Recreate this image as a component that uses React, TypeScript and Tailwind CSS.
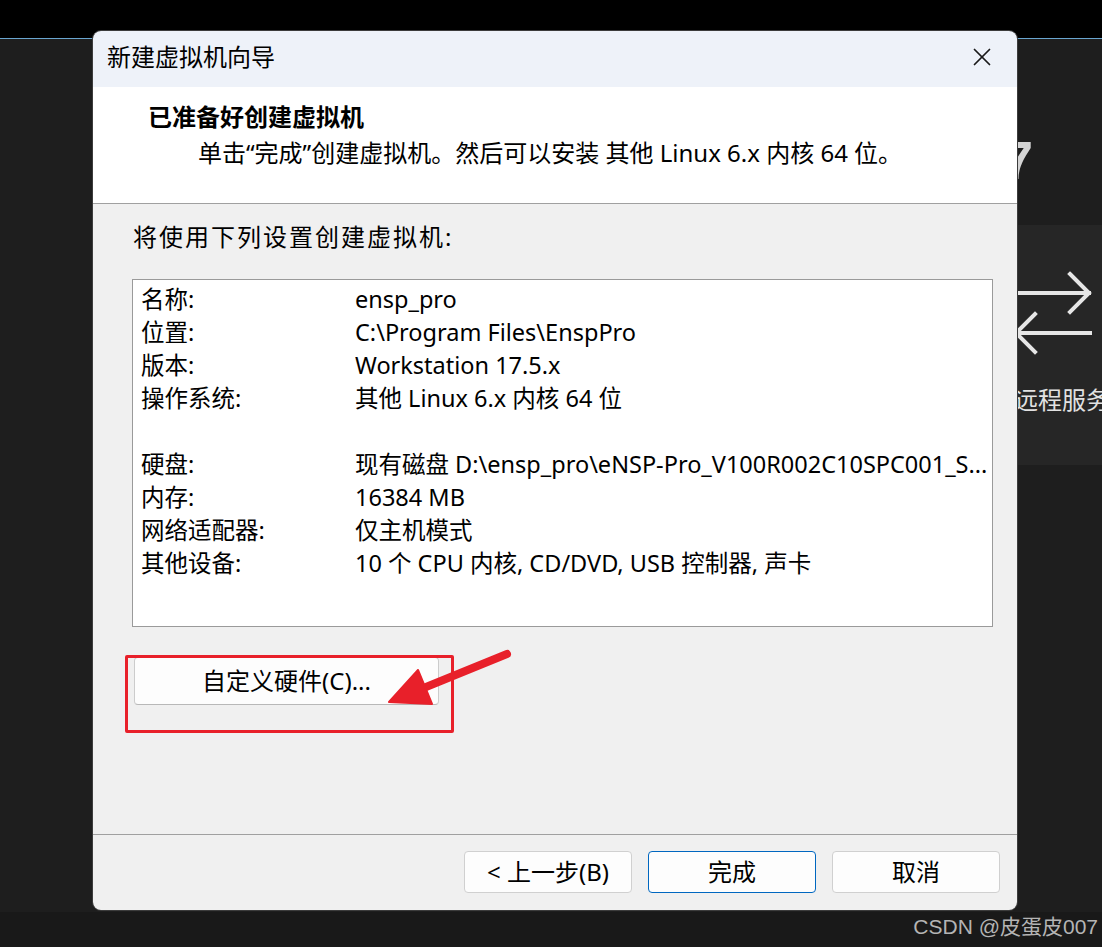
import { X } from "lucide-react";

const rows: [string, string][] = [
  ["名称:", "ensp_pro"],
  ["位置:", "C:\\Program Files\\EnspPro"],
  ["版本:", "Workstation 17.5.x"],
  ["操作系统:", "其他 Linux 6.x 内核 64 位"],
  ["", ""],
  ["硬盘:", "现有磁盘 D:\\ensp_pro\\eNSP-Pro_V100R002C10SPC001_S..."],
  ["内存:", "16384 MB"],
  ["网络适配器:", "仅主机模式"],
  ["其他设备:", "10 个 CPU 内核, CD/DVD, USB 控制器, 声卡"],
];

const font = "font-['Noto_Sans','Noto_Sans_CJK_SC',sans-serif]";

function Backdrop() {
  return (
    <>
      <div className="h-[38px] bg-black" />
      <div className="h-px bg-[#6aa6d0]" />
      <div className="h-[873px] bg-[#1e1e1e]" />
      <div className="h-[35px] bg-[#191919]" />

      {/* bits of the app window behind the dialog */}
      <div className="absolute left-[1017px] top-[225px] h-[240px] w-[85px] bg-[#262626]" />
      <span className="absolute left-[1003px] top-[133px] text-[54px] font-bold leading-none text-[#d4d4d4] font-['Liberation_Sans',sans-serif]">
        7
      </span>
      <svg
        className="absolute left-[990px] top-[265px]"
        width="110"
        height="95"
        viewBox="0 0 110 95"
        fill="none"
        stroke="#e6e6e6"
        strokeWidth="4"
        strokeLinecap="square"
      >
        <path d="M0 28H99M80 9L99 28L80 47" />
        <path d="M26 68H100M45 49L26 68L45 87" />
      </svg>
      <span
        className={`absolute left-[1014px] top-[388px] whitespace-nowrap text-[24px] leading-none text-[#e2e2e2] ${font}`}
      >
        远程服务
      </span>
      <span className="absolute right-[4px] top-[913px] text-[21px] leading-[28px] text-[#b4b4b4] font-['Liberation_Sans','Noto_Sans_CJK_SC',sans-serif]">
        CSDN @皮蛋皮007
      </span>
    </>
  );
}

function WinButton({ label, primary }: { label: string; primary?: boolean }) {
  return (
    <button
      className={
        "h-[42px] w-[168px] rounded-[4px] bg-[#fdfdfd] text-[24px] text-black " +
        (primary ? "border-[1.5px] border-[#0067c0]" : "border border-[#d0d0d0]")
      }
    >
      {label}
    </button>
  );
}

function Wizard() {
  return (
    <div
      className={`absolute left-[92px] top-[30px] flex h-[881px] w-[926px] flex-col overflow-hidden rounded-[9px] border border-[#3c3c3c] text-black ${font}`}
    >
      <div className="flex h-[56px] items-center justify-between bg-[#eef2f9] pb-[5px] pl-[14px] pr-[20px]">
        <span className="text-[24px] leading-none">新建虚拟机向导</span>
        <X size={30} strokeWidth={1.4} color="#1a1a1a" />
      </div>

      <div className="h-[117px] border-b border-[#a0a0a0] bg-white pl-[55px] pt-[16px]">
        <div className="text-[24px] font-bold leading-[28px]">已准备好创建虚拟机</div>
        <div className="mt-[8px] pl-[50px] text-[24px] leading-[28px]">
          单击“完成”创建虚拟机。然后可以安装 其他 Linux 6.x 内核 64 位。
        </div>
      </div>

      <div className="relative flex-1 bg-[#f0f0f0] pl-[39px] pt-[19px]">
        <div className="pl-px text-[24px] leading-[28px] tracking-[2px]">将使用下列设置创建虚拟机:</div>

        <div className="mt-[28px] h-[348px] w-[861px] border border-[#9a9a9a] bg-white pl-[8px] pt-[3px]">
          {rows.map(([k, v], i) => (
            <div key={i} className="flex h-[33px] items-center text-[23.5px]">
              <span className="w-[214px] shrink-0">{k}</span>
              <span className="overflow-hidden whitespace-nowrap">{v}</span>
            </div>
          ))}
        </div>

        <button className="ml-[2px] mt-[30px] h-[48px] w-[305px] rounded-[4px] border border-[#cccccc] border-b-[#b8b8b8] bg-[#fdfdfd] text-[24px]">
          自定义硬件(C)...
        </button>

        {/* annotation from the screenshot */}
        <div className="absolute left-[32px] top-[451px] h-[78px] w-[329px] rounded-[2px] border-[3px] border-[#e8202a]" />
        <svg
          className="absolute left-[288px] top-[441px]"
          width="135"
          height="65"
          viewBox="0 0 135 65"
        >
          <path d="M126 9L45 42" stroke="#e8202a" strokeWidth="8" strokeLinecap="round" />
          <path d="M8 57L51 59L37 25Z" fill="#e8202a" stroke="#e8202a" strokeWidth="2" strokeLinejoin="round" />
        </svg>
      </div>

      <div className="flex h-[76px] justify-end gap-[16px] border-t border-[#a0a0a0] bg-[#f0f0f0] pr-[17px] pt-[16px]">
        <WinButton label="< 上一步(B)" />
        <WinButton label="完成" primary />
        <WinButton label="取消" />
      </div>
    </div>
  );
}

export default function App() {
  return (
    <div className="relative h-[947px] w-[1102px] overflow-hidden bg-[#1e1e1e]">
      <Backdrop />
      <Wizard />
    </div>
  );
}
